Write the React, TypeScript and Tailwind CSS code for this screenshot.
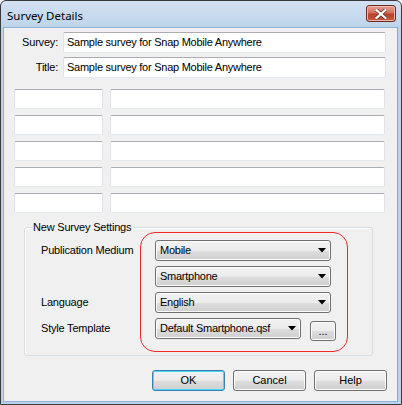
import React from "react";

const font = { fontFamily: '"Liberation Sans", Arial, sans-serif' };

function TextBox({ w, h = 21, value }: { w: number; h?: number; value?: string }) {
  return (
    <div
      className="bg-white border border-t-[#abadb3] border-l-[#e2e3ea] border-r-[#e2e3ea] border-b-[#e3e9ef] rounded-[2px] flex items-center px-[3px] text-[11px] tracking-[-0.25px] text-black"
      style={{ width: w, height: h }}
    >
      {value}
    </div>
  );
}

function Arrow() {
  return (
    <svg width="8" height="5" viewBox="0 0 8 5" className="shrink-0">
      <path d="M0 0 L8 0 L4 4.5 Z" fill="#000" />
    </svg>
  );
}

function Combo({ w, value }: { w: number; value: string }) {
  return (
    <div
      className="h-[21px] border border-[#707070] rounded-[3px] bg-[linear-gradient(#f2f2f2_0%,#ebebeb_50%,#dddddd_51%,#cfcfcf_100%)] flex items-center justify-between pl-[4px] pr-[4px] text-[11px] tracking-[-0.25px] text-black shadow-[inset_0_0_0_1px_#fcfcfc]"
      style={{ width: w }}
    >
      <span>{value}</span>
      <Arrow />
    </div>
  );
}

function Button({ label, primary }: { label: string; primary?: boolean }) {
  return (
    <div
      className={
        "w-[73px] h-[21px] rounded-[3px] flex items-center justify-center text-[11px] text-black bg-[linear-gradient(#f2f2f2_0%,#ebebeb_50%,#dddddd_51%,#cfcfcf_100%)] border " +
        (primary
          ? "border-[#3c7fb1] shadow-[inset_0_0_0_1px_#48d8fb]"
          : "border-[#707070] shadow-[inset_0_0_0_1px_#fcfcfc]")
      }
    >
      {label}
    </div>
  );
}

const label = "text-[11px] tracking-[-0.2px] text-black";

export default function App() {
  return (
    <div className="w-[402px] h-[405px] bg-white" style={font}>
      <div className="w-[402px] h-[405px] border border-[#3a3a3a] rounded-t-[6px] bg-[linear-gradient(#d2e1f2,#bcd2ea_30px,#bcd2ea)] flex flex-col overflow-hidden">
        {/* Title bar */}
        <div className="h-[26px] flex items-start justify-between pl-[6px] pr-[5px] shrink-0">
          <span className="mt-[6px] text-[11.5px] text-black" style={{ fontFamily: '"Noto Sans", "Liberation Sans", sans-serif' }}>
            Survey Details
          </span>
          <div className="mt-[4px] w-[30px] h-[17px] rounded-[3px] border border-[#6d2a22] bg-[linear-gradient(#e8a093,#d2705d_45%,#b8412a_55%,#c9583f)] flex items-center justify-center shadow-[inset_0_0_0_1px_#f0b8ad]">
            <svg width="12" height="10" viewBox="0 0 12 10">
              <path d="M1.5 1 L10.5 9 M10.5 1 L1.5 9" stroke="#5a2a24" strokeWidth="3.6" strokeLinecap="square" />
              <path d="M1.5 1 L10.5 9 M10.5 1 L1.5 9" stroke="#ffffff" strokeWidth="2.2" strokeLinecap="square" />
            </svg>
          </div>
        </div>
        {/* Client */}
        <div className="flex-1 mx-[2px] mb-[2px] mr-[3px] border border-[#8fb1d6] border-r-[#5ab8ee] bg-[#f0f0f0] flex flex-col">
          <div className="flex flex-col gap-[4px] pt-[4px]">
            <div className="flex items-center">
              <span className={"w-[55px] text-right pr-[1px] " + label}>Survey:</span>
              <div className="ml-[4px]">
                <TextBox w={323} value="Sample survey for Snap Mobile Anywhere" />
              </div>
            </div>
            <div className="flex items-center">
              <span className={"w-[55px] text-right pr-[1px] " + label}>Title:</span>
              <div className="ml-[4px]">
                <TextBox w={323} value="Sample survey for Snap Mobile Anywhere" />
              </div>
            </div>
          </div>
          <div className="flex flex-col gap-[6px] mt-[11px] pl-[10px]">
            {[0, 1, 2, 3, 4].map((i) => (
              <div key={i} className="flex gap-[7px]">
                <TextBox w={89} h={20} />
                <TextBox w={275} h={20} />
              </div>
            ))}
          </div>
          {/* Group box */}
          <div className="relative mt-[14px] ml-[20px] w-[349px] h-[129px] border border-[#d5dfe5] rounded-[3px] shadow-[inset_1px_1px_0_#ffffff]">
            <span className={"absolute left-[7px] -top-[8px] px-[1px] bg-[#f0f0f0] leading-[14px] " + label}>
              New Survey Settings
            </span>
            <div className="flex pl-[16px] pt-[4px]">
              <div className="w-[99px] flex flex-col pt-[8px] gap-[5px]">
                <div className={"h-[21px] flex items-center whitespace-nowrap " + label}>Publication Medium</div>
                <div className="h-[21px]" />
                <div className={"h-[21px] flex items-center " + label}>Language</div>
                <div className={"h-[21px] flex items-center " + label}>Style Template</div>
              </div>
              <div className="w-[208px] h-[120px] border border-[#f02a2a] rounded-[15px] flex flex-col gap-[5px] pl-[14px] pt-[7px]">
                <Combo w={176} value="Mobile" />
                <Combo w={176} value="Smartphone" />
                <Combo w={176} value="English" />
                <div className="flex items-start gap-[9px]">
                  <Combo w={146} value="Default Smartphone.qsf" />
                  <div className="mt-[3px] w-[26px] h-[20px] rounded-[3px] border border-[#707070] bg-[linear-gradient(#f2f2f2_0%,#ebebeb_50%,#dddddd_51%,#cfcfcf_100%)] shadow-[inset_0_0_0_1px_#fcfcfc] flex items-center justify-center text-[11px] text-black leading-none">
                    ...
                  </div>
                </div>
              </div>
            </div>
          </div>
          <div className="flex justify-end gap-[8px] mt-[14px] pr-[10px]">
            <Button label="OK" primary />
            <Button label="Cancel" />
            <Button label="Help" />
          </div>
        </div>
      </div>
    </div>
  );
}
